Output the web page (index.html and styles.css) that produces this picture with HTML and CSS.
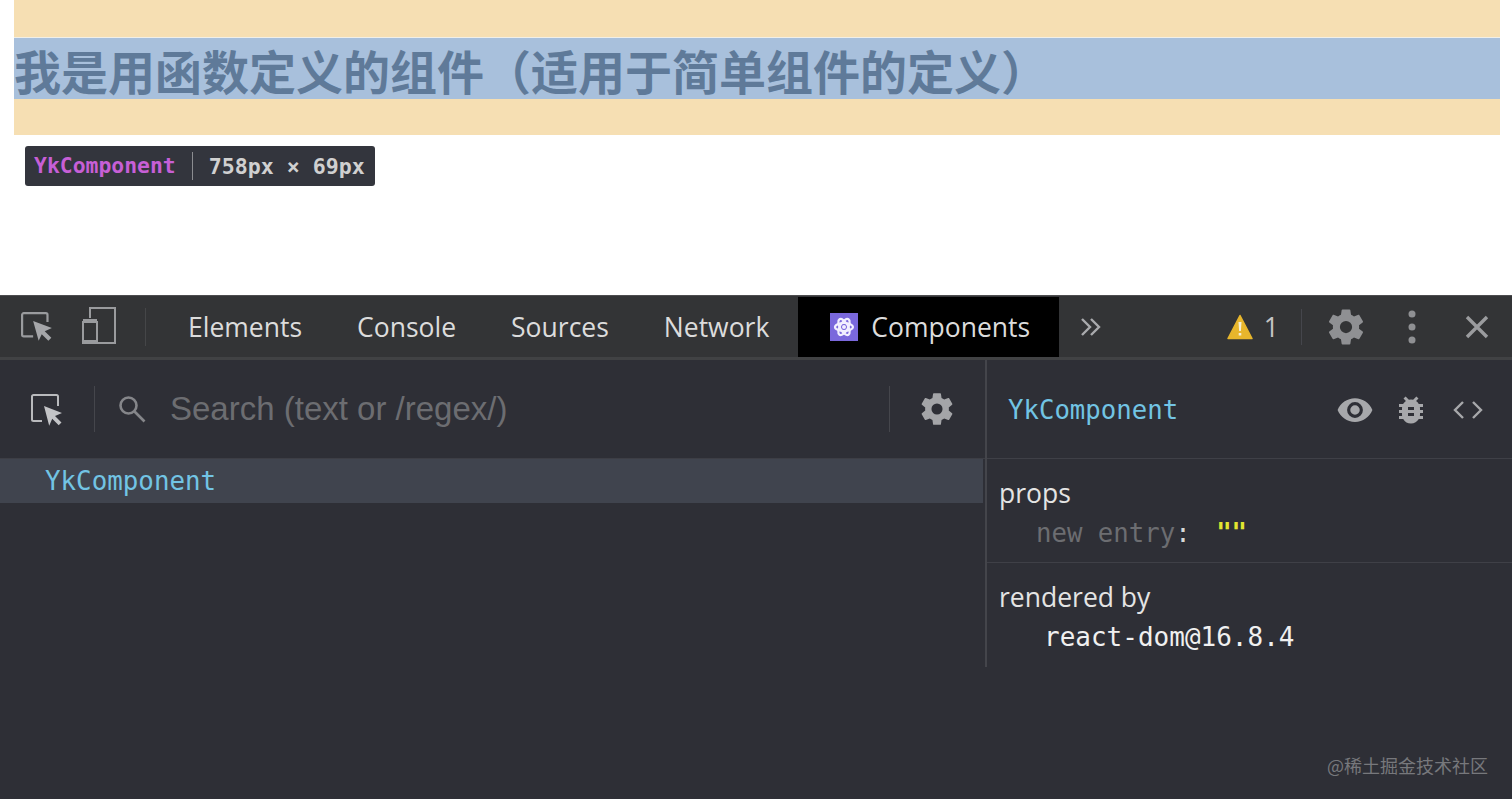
FILE: index.html
```html
<!DOCTYPE html>
<html lang="en">
<head>
  <meta charset="UTF-8">
  <meta name="viewport" content="width=device-width, initial-scale=1.0">
  <title>YkComponent</title>
  <link rel="stylesheet" href="styles.css">
</head>
<body>

  <!-- Inspected page -->
  <div class="page">
    <div class="highlight">
      <h1 class="heading">我是用函数定义的组件（适用于简单组件的定义）</h1>
    </div>
    <div class="tooltip">
      <span class="tooltip-name">YkComponent</span>
      <span class="tooltip-size">758px × 69px</span>
    </div>
  </div>

  <div class="devtools">
    <!-- Main toolbar -->
    <div class="toolbar">
      <div class="tool-icons">
        <svg class="icon-inspect" width="32" height="32" viewBox="3 5 29 27" fill="none">
          <path d="M14 27H5.500a1.500 1.500 0 0 1-1.500-1.500V7.500A1.500 1.500 0 0 1 5.500 6h20A1.500 1.500 0 0 1 27 7.500V14" stroke="#9a9b9e" stroke-width="2"/>
          <path d="M14 13l17 6.500-6.500 2.800 6 6-2.700 2.700-6-6L19 31z" fill="#a5a6a9"/>
        </svg>
        <svg class="icon-device" width="38" height="40" viewBox="0 0 38 40" fill="none">
          <path d="M10 12V2h25v35H3V16h14v21" stroke="#9a9b9e" stroke-width="2"/>
          <path d="M3 13h14v4H3zM3 34h14v4H3z" fill="#9a9b9e"/>
        </svg>
      </div>
      <div class="tabs">
        <div class="tab">Elements</div>
        <div class="tab">Console</div>
        <div class="tab">Sources</div>
        <div class="tab">Network</div>
        <div class="tab tab-active">
          <svg width="28" height="28" viewBox="0 0 28 28">
            <rect width="28" height="28" fill="#7a68dc"/>
            <g fill="none" stroke="#f2f0ff" stroke-width="2.200">
              <ellipse cx="14" cy="14" rx="9" ry="4"/>
              <ellipse cx="14" cy="14" rx="9" ry="4" transform="rotate(60 14 14)"/>
              <ellipse cx="14" cy="14" rx="9" ry="4" transform="rotate(120 14 14)"/>
            </g>
            <circle cx="14" cy="14" r="2" fill="#f2f0ff"/>
          </svg>
          <span>Components</span>
        </div>
        <svg class="more" width="22" height="20" viewBox="0 0 22 20" fill="none" stroke="#a9aaad" stroke-width="2.400">
          <path d="M2 2l8 8-8 8M11 2l8 8-8 8"/>
        </svg>
      </div>
      <div class="toolbar-right">
        <svg width="26" height="26" viewBox="0 0 26 26">
          <path d="M13 1.500L25 24.500H1z" fill="#e8b62c" stroke="#e8b62c" stroke-linejoin="round" stroke-width="1.500"/>
          <path d="M11.500 8h3l-.6 9h-1.800zM11.700 19h2.600v2.600h-2.600z" fill="#f5efd8"/>
        </svg>
        <span class="warn-count">1</span>
        <span class="divider"></span>
        <svg class="gear-main" width="42" height="42" viewBox="0 0 24 24">
          <path fill="#8f9093" d="M19.430 12.980c.04-.32.070-.64.070-.98s-.03-.66-.07-.98l2.110-1.650c.19-.15.240-.42.120-.64l-2-3.460c-.12-.22-.39-.3-.61-.22l-2.490 1c-.52-.4-1.080-.73-1.690-.98l-.38-2.650A.49.490 0 0 0 14 2h-4c-.25 0-.46.180-.49.420l-.38 2.650c-.61.250-1.170.59-1.690.98l-2.490-1c-.23-.09-.49 0-.61.220l-2 3.460c-.13.220-.07.490.12.640l2.110 1.650c-.04.320-.07.650-.07.980s.03.660.07.980l-2.110 1.650c-.19.150-.24.420-.12.640l2 3.460c.12.220.39.300.61.220l2.490-1c.52.400 1.080.730 1.690.980l.38 2.650c.03.240.24.420.49.420h4c.25 0 .46-.18.49-.42l.38-2.650c.61-.25 1.170-.59 1.690-.98l2.490 1c.23.090.49 0 .61-.22l2-3.460c.12-.22.070-.49-.12-.64zM12 15.500a3.500 3.500 0 1 1 0-7 3.500 3.500 0 0 1 0 7z"/>
        </svg>
        <svg class="dots" width="10" height="34" viewBox="0 0 10 34" fill="#8f9093">
          <circle cx="5" cy="4" r="3.500"/><circle cx="5" cy="17" r="3.500"/><circle cx="5" cy="30" r="3.500"/>
        </svg>
        <svg class="close" width="24" height="24" viewBox="0 0 24 24" stroke="#9b9c9f" stroke-width="3.400">
          <path d="M2 2l20 20M22 2L2 22"/>
        </svg>
      </div>
    </div>

    <!-- Components panel -->
    <div class="panel">
      <div class="tree">
        <div class="search-bar">
          <svg class="icon-select" width="36" height="36" viewBox="0 0 36 36" fill="none">
            <path d="M14 30H5.500A1.500 1.500 0 0 1 4 28.500V5.500A1.500 1.500 0 0 1 5.500 4h23A1.500 1.500 0 0 1 30 5.500V15" stroke="#b9babd" stroke-width="2"/>
            <path d="M16 15l18 7-7 3 6.500 6.500-2.800 2.800-6.500-6.500-3 7z" fill="#c3c4c7"/>
          </svg>
          <span class="divider"></span>
          <svg class="icon-search" width="30" height="30" viewBox="0 0 30 30" fill="none" stroke="#85868a" stroke-width="2.600">
            <circle cx="11.500" cy="11.500" r="8"/><path d="M17.500 17.500l10 10"/>
          </svg>
          <span class="search-text">Search (text or /regex/)</span>
          <span class="divider"></span>
          <svg class="gear-search" width="38" height="38" viewBox="0 0 24 24">
            <path fill="#a4a5a8" d="M19.430 12.980c.04-.32.070-.64.070-.98s-.03-.66-.07-.98l2.110-1.650c.19-.15.240-.42.120-.64l-2-3.460c-.12-.22-.39-.3-.61-.22l-2.490 1c-.52-.4-1.080-.73-1.690-.98l-.38-2.650A.49.490 0 0 0 14 2h-4c-.25 0-.46.180-.49.420l-.38 2.650c-.61.250-1.170.59-1.690.98l-2.490-1c-.23-.09-.49 0-.61.220l-2 3.460c-.13.220-.07.490.12.640l2.110 1.650c-.04.320-.07.650-.07.980s.03.660.07.980l-2.110 1.650c-.19.150-.24.420-.12.640l2 3.460c.12.220.39.300.61.220l2.490-1c.52.400 1.080.730 1.690.980l.38 2.650c.03.240.24.420.49.420h4c.25 0 .46-.18.49-.42l.38-2.650c.61-.25 1.170-.59 1.690-.98l2.490 1c.23.090.49 0 .61-.22l2-3.460c.12-.22.070-.49-.12-.64zM12 15.500a3.500 3.500 0 1 1 0-7 3.500 3.500 0 0 1 0 7z"/>
          </svg>
        </div>
        <div class="tree-row">YkComponent</div>
      </div>

      <div class="side">
        <div class="side-head">
          <span class="side-name">YkComponent</span>
          <svg class="icon-eye" width="38" height="38" viewBox="0 0 24 24">
            <path fill="#a7a8ab" d="M12 4.500C7 4.500 2.730 7.610 1 12c1.730 4.390 6 7.500 11 7.500s9.270-3.110 11-7.500c-1.730-4.390-6-7.500-11-7.500zM12 17a5 5 0 1 1 0-10 5 5 0 0 1 0 10zm0-8a3 3 0 1 0 0 6 3 3 0 0 0 0-6z"/>
          </svg>
          <svg class="icon-bug" width="36" height="36" viewBox="0 0 24 24">
            <path fill="#a7a8ab" d="M20 8h-2.810a5.985 5.985 0 0 0-1.820-1.960L17 4.410 15.590 3l-2.170 2.170a6 6 0 0 0-2.830 0L8.410 3 7 4.410l1.620 1.630C7.810 6.600 7.140 7.340 6.690 8H4v2h2.090c-.05.330-.09.660-.09 1v1H4v2h2v1c0 .340.040.670.090 1H4v2h2.810A5.980 5.980 0 0 0 12 21c2.220 0 4.150-1.210 5.190-3H20v-2h-2.090c.05-.33.090-.66.090-1v-1h2v-2h-2v-1c0-.34-.04-.67-.09-1H20V8zm-6 8h-4v-2h4v2zm0-4h-4v-2h4v2z"/>
          </svg>
          <svg class="icon-code" width="30" height="20" viewBox="0 0 30 20" fill="none" stroke="#a7a8ab" stroke-width="2.400">
            <path d="M10 2l-8 8 8 8M20 2l8 8-8 8"/>
          </svg>
        </div>
        <div class="side-section">
          <div class="side-title">props</div>
          <div class="prop"><span class="prop-key">new entry</span><span class="prop-colon">:</span> <span class="prop-value">""</span></div>
        </div>
        <div class="side-section side-last">
          <div class="side-title">rendered by</div>
          <div class="renderer">react-dom@16.8.4</div>
        </div>
      </div>
    </div>

    <div class="watermark">@稀土掘金技术社区</div>
  </div>

</body>
</html>
```

FILE: styles.css
```css
* {
  box-sizing: border-box;
}

body {
  margin: 0;
  height: 799px;
  overflow: hidden;
  display: flex;
  flex-direction: column;
  background-color: #ffffff;
  font-family: "Open Sans", sans-serif;
}

/* inspected page */
.page {
  height: 295px;
  padding: 0 12px 0 14px;
}

.highlight {
  height: 135px;
  padding-top: 37px;
  background-color: #f6dfb3;
}

.heading {
  height: 62px;
  margin: 0;
  background-color: #a8c0dc;
  border-top: 1px solid #f0efe8;
  color: #5f7a99;
  font-family: "Noto Sans CJK SC", sans-serif;
  font-size: 47px;
  font-weight: 700;
  line-height: 64px;
  white-space: nowrap;
}

.tooltip {
  display: flex;
  align-items: center;
  width: 350px;
  height: 40px;
  margin: 11px 0 0 11px;
  background-color: #33353d;
  border-radius: 3px;
  font-family: "DejaVu Sans Mono", monospace;
  font-size: 21.400px;
  font-weight: 700;
}

.tooltip-name {
  padding: 0 16px 0 9px;
  border-right: 1px solid #8b8c90;
  color: #c75fd6;
  line-height: 28px;
}

.tooltip-size {
  padding-left: 16px;
  color: #d0d0d0;
  font-size: 21.600px;
}

/* devtools */
.devtools {
  position: relative;
  flex: 1;
  display: flex;
  flex-direction: column;
  background-color: #2e2f36;
}

.toolbar {
  display: flex;
  align-items: center;
  height: 65px;
  background-color: #333436;
  border-top: 1px solid #4d4d4f;
  border-bottom: 3px solid #414244;
}

.tool-icons {
  display: flex;
  align-items: center;
  gap: 27px;
  width: 146px;
  height: 38px;
  padding-left: 21px;
  border-right: 1px solid #454648;
}

.icon-device {
  margin-top: -2px;
}

.tabs {
  flex: 1;
  display: flex;
  align-items: center;
  height: 100%;
  padding-left: 14.500px;
  color: #dcdcdc;
  font-size: 26.500px;
}

.tab {
  display: flex;
  align-items: center;
  height: 100%;
  padding: 0 27.500px;
}

.tab-active {
  gap: 13px;
  height: 60px;
  margin-left: 1.500px;
  padding: 0 29px 0 32px;
  background-color: #000000;
}

.more {
  margin-left: 21px;
}

.toolbar-right {
  display: flex;
  align-items: center;
  height: 100%;
  padding-right: 23px;
  color: #c4c4c4;
}

.warn-count {
  margin-left: 11px;
  font-size: 26.500px;
}

.toolbar-right .divider {
  height: 36px;
  margin: 0 23px 0 22px;
}

.divider {
  width: 1px;
  height: 46px;
  background-color: #45464c;
}

.gear-main {
  margin-right: 40px;
}

.dots {
  margin-right: 48px;
}

/* components panel */
.panel {
  display: flex;
  height: 307px;
}

.tree {
  width: 985px;
}

.search-bar {
  display: flex;
  align-items: center;
  height: 99px;
  padding: 0 29px 0 28px;
  border-bottom: 1px solid #3d3e45;
}

.icon-select {
  margin-right: 30px;
}

.icon-search {
  margin: 0 0 0 22px;
}

.search-text {
  flex: 1;
  margin-left: 23px;
  color: #6c6d71;
  font-family: "Liberation Sans", sans-serif;
  font-size: 33px;
}

.gear-search {
  margin-left: 28px;
}

.tree-row {
  height: 44px;
  margin-right: 2px;
  padding-left: 45px;
  background-color: #40444e;
  color: #72c4e4;
  font-family: "DejaVu Sans Mono", monospace;
  font-size: 25.850px;
  line-height: 44px;
}

.side {
  flex: 1;
  border-left: 2px solid #44454b;
}

.side-head {
  display: flex;
  align-items: center;
  height: 99px;
  padding: 2px 0 0 21px;
  border-bottom: 1px solid #3f4047;
}

.side-name {
  flex: 1;
  color: #72c4e4;
  font-family: "DejaVu Sans Mono", monospace;
  font-size: 25.700px;
}

.icon-bug {
  margin: 0 0 0 19px;
}

.icon-code {
  margin: 0 29px 0 24px;
}

.side-section {
  height: 104px;
  padding: 16px 0 0 12px;
  border-bottom: 1px solid #3f4047;
  color: #e4e4e4;
  font-size: 26.500px;
  line-height: 36px;
}

.side-last {
  border-bottom: 0;
}

.prop {
  margin-top: 4px;
  padding-left: 37px;
  font-family: "DejaVu Sans Mono", monospace;
  font-size: 25.700px;
  white-space: pre;
}

.prop-key {
  color: #6c6d71;
}

.prop-colon {
  color: #d8d8d8;
}

.prop-value {
  margin-left: 10px;
  color: #e2e630;
  font-weight: 700;
}

.renderer {
  margin-top: 4px;
  padding-left: 45px;
  color: #f0f0f0;
  font-family: "DejaVu Sans Mono", monospace;
  font-size: 26px;
}

.watermark {
  position: absolute;
  right: 24px;
  bottom: 22px;
  color: #77787c;
  font-family: "Noto Sans CJK SC", sans-serif;
  font-size: 18px;
  line-height: 24px;
}
```
